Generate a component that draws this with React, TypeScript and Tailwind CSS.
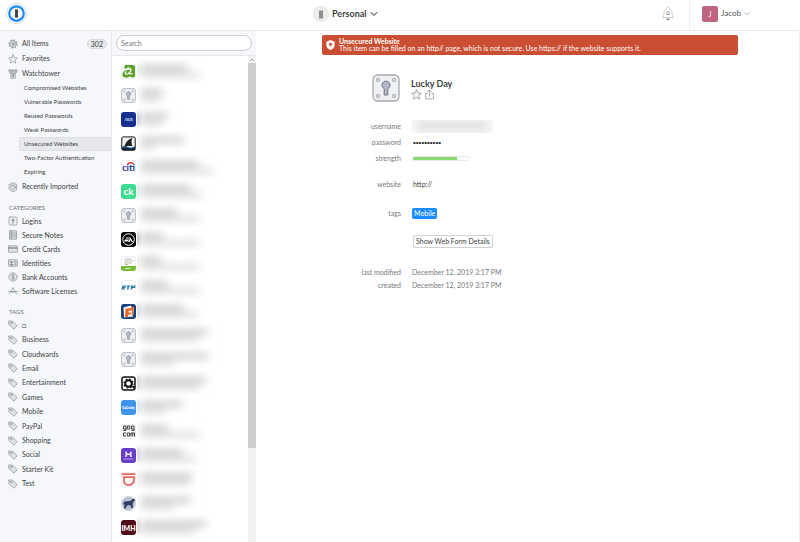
import type { ReactNode } from "react";

const stroke = { fill: "none", stroke: "currentColor", strokeWidth: 1.4, strokeLinecap: "round", strokeLinejoin: "round" } as const;

function Glyph({ children, size = "size-[10px]" }: { children: ReactNode; size?: string }) {
  return (
    <svg viewBox="0 0 20 20" className={`${size} shrink-0 text-[#8e9196]`} aria-hidden="true" {...stroke}>
      {children}
    </svg>
  );
}

const starPath = "M10 1.5l2.5 6 6.3.4-4.9 4.1 1.6 6.3L10 14.9l-5.5 3.4L6.1 12 1.2 7.9l6.3-.4z";

const icons: Record<string, ReactNode> = {
  gear: (
    <>
      <circle cx="10" cy="10" r="6.8" fill="#e3e5e9" />
      <circle cx="10" cy="10" r="8.3" strokeWidth="2" strokeDasharray="3.2 3.3" strokeLinecap="butt" />
      <circle cx="10" cy="10" r="2.6" />
      <path d="M10 3.5v4M10 12.5v4M3.5 10h4M12.5 10h4" strokeWidth="1" />
    </>
  ),
  star: <path d={starPath} />,
  tower: (
    <>
      <path d="M2.5 1.5h3v2h3v-2h3v2h3v-2h3v5l-2.5 2.5h-10L2.5 6.5z" fill="#b9bcc1" />
      <path d="M5.5 9.5v9h9v-9" fill="#e1e3e6" />
      <path d="M10 11v4" strokeWidth="3" />
    </>
  ),
  recent: (
    <>
      <path d="M3 4.500h3l1-2.500h6l1 2.500h3v11L14 18.500H6L3 15.500z" fill="#eceef1" />
      <circle cx="10" cy="10.500" r="5" />
      <path d="M10 7.500v3h2.500" />
    </>
  ),
  login: (
    <>
      <rect x="2" y="2" width="16" height="16" rx="2.5" fill="#eceef1" />
      <circle cx="10" cy="8" r="2" fill="currentColor" />
      <path d="M10 9v5" strokeWidth="2.4" />
    </>
  ),
  note: (
    <>
      <rect x="3" y="1.5" width="14" height="17" rx="1" fill="#dfe1e5" />
      <path d="M7 2v16M3.5 6h13M3.5 10h13M3.5 14h13" />
    </>
  ),
  card: (
    <>
      <rect x="1" y="3.5" width="18" height="13" rx="1.5" fill="#dfe1e5" />
      <path d="M1.5 8h17" strokeWidth="3" />
    </>
  ),
  identity: (
    <>
      <rect x="1" y="3.5" width="18" height="13" rx="1.5" fill="#dfe1e5" />
      <circle cx="7" cy="8.5" r="1.8" fill="currentColor" />
      <path d="M4 14c0-3 6-3 6 0zM13 7h3M13 10h3M13 13h3" fill="currentColor" />
    </>
  ),
  bank: (
    <>
      <circle cx="10" cy="10" r="8.3" fill="#e3e5e9" />
      <path d="M13 7c-.5-2-6-2-6 .5s6 2 6 4.8-5.500 2.500-6 .4M10 4v12" />
    </>
  ),
  software: <path d="M3 16L10 3l7 13M1 11h18M6.500 11l3.500 3 3.500-3" />,
  tag: (
    <>
      <path d="M2 2h7l9.500 9.500-7 7L2 9z" fill="#dfe1e5" />
      <circle cx="6" cy="6" r="1.6" fill="#f5f7fb" />
    </>
  ),
};

const mainItems = [
  { label: "All Items", icon: "gear", count: 302 },
  { label: "Favorites", icon: "star" },
  { label: "Watchtower", icon: "tower" },
];
const watchtower = [
  "Compromised Websites",
  "Vulnerable Passwords",
  "Reused Passwords",
  "Weak Passwords",
  "Unsecured Websites",
  "Two-Factor Authentication",
  "Expiring",
];
const categories = [
  { label: "Logins", icon: "login" },
  { label: "Secure Notes", icon: "note" },
  { label: "Credit Cards", icon: "card" },
  { label: "Identities", icon: "identity" },
  { label: "Bank Accounts", icon: "bank" },
  { label: "Software Licenses", icon: "software" },
];
const tags = ["□", "Business", "Cloudwards", "Email", "Entertainment", "Games", "Mobile", "PayPal", "Shopping", "Social", "Starter Kit", "Test"];

function NavLink({ label, icon, count }: { label: string; icon: string; count?: number }) {
  return (
    <a href="#" className="flex h-full items-center gap-[4px] pl-[8px] pr-[4px]">
      <Glyph>{icons[icon]}</Glyph>
      <span className="flex-1">{label}</span>
      {count && (
        <span className="rounded-full border border-[#d9dbdf] bg-[#e6e8eb] px-[3px] leading-[8px]">{count}</span>
      )}
    </a>
  );
}

function Sidebar() {
  return (
    <nav className="w-[112px] shrink-0 overflow-hidden border-r border-[#e6e8ec] bg-[#f5f7fb] pt-[5px] text-[#3d3f43]">
      <ul>
        {mainItems.map((item) => (
          <li key={item.label} className="h-[15px]">
            <NavLink {...item} />
          </li>
        ))}
      </ul>
      <ul className="pl-[19px] text-[6px]">
        {watchtower.map((label) => (
          <li key={label}>
            <a
              href="#"
              className={
                label === "Unsecured Websites"
                  ? "block rounded-l-[2px] border border-r-0 border-[#dddfe3] bg-[#e6e8ec] pl-[4px] leading-[12px]"
                  : "block pl-[5px] leading-[14px]"
              }
            >
              {label}
            </a>
          </li>
        ))}
      </ul>
      <div className="h-[15px]">
        <NavLink label="Recently Imported" icon="recent" />
      </div>
      <h2 className="mt-[8px] pl-[9px] text-[6px] leading-[12px] text-[#6c6f74]">CATEGORIES</h2>
      <ul>
        {categories.map((item) => (
          <li key={item.label} className="h-[14px]">
            <NavLink {...item} />
          </li>
        ))}
      </ul>
      <h2 className="mt-[8px] pl-[9px] text-[6px] leading-[12px] text-[#6c6f74]">TAGS</h2>
      <ul className="grid h-[173px] auto-rows-fr">
        {tags.map((label) => (
          <li key={label}>
            <NavLink label={label} icon="tag" />
          </li>
        ))}
      </ul>
    </nav>
  );
}

function Keyhole({ className }: { className: string }) {
  return (
    <svg viewBox="0 0 28 28" className={className} aria-hidden="true">
      <rect x="1" y="1" width="26" height="26" rx="4.5" fill="#eef0f4" stroke="#a5a8ad" strokeWidth="1.3" />
      <g fill="#e6e8ec" stroke="#8e9196" strokeWidth=".8">
        <circle cx="6" cy="6" r="1.6" />
        <circle cx="22" cy="6" r="1.6" />
        <circle cx="6" cy="22" r="1.6" />
        <circle cx="22" cy="22" r="1.6" />
      </g>
      <path d="M12.2 14.7a4 4 0 1 1 3.6 0V21h-3.6z" fill="#b4b9cc" stroke="#70747f" strokeWidth="1" />
    </svg>
  );
}

const word = { textAnchor: "middle", fontFamily: "Lato, sans-serif", fontWeight: 900 } as const;

const logos: Record<string, ReactNode> = {
  a2: (
    <>
      <path d="M8 2h15q5 0 5 5v16q0 4-3 4-5 0-7-2-5 3-10 2-6-1-5-7 1-7 9-8h6q-1-3-5-3H6z" fill="#5f9f2c" />
      <path d="M12 8q8-1 8 4-1 4-5 7h8M11 15q-4 2-2 5l4 1" fill="none" stroke="#fff" strokeWidth="2.5" />
    </>
  ),
  asus: <text x="15" y="17.5" fontSize="7" fill="#dfe5ff" {...word}>/SUS</text>,
  shark: (
    <>
      <rect x="1.5" y="1.5" width="27" height="27" rx="3" fill="#f2f3f4" stroke="#444" strokeWidth="2.5" />
      <path d="M7 20Q12 6 23 4q-4 8 0 16z" fill="#222" />
      <path d="M2 22q6-4 12 0t14-1v7H2z" fill="#111d30" />
      <path d="M3 23q6-3 11 0t13-1" fill="none" stroke="#3b82c4" strokeWidth="2" />
    </>
  ),
  citi: (
    <>
      <text x="15" y="22" fontSize="18" fill="#26408f" {...word}>citi</text>
      <path d="M13 8q6-5 12 0" fill="none" stroke="#e03a3a" strokeWidth="2.5" />
    </>
  ),
  ck: <text x="15" y="21" fontSize="20" fill="#fff" {...word} fontWeight={700}>ck</text>,
  ea: (
    <>
      <circle cx="15" cy="15" r="11.5" fill="none" stroke="#fff" strokeWidth="2" />
      <path d="M10 11h8l-1 2h-7zM8 15h8l-3 4H6zM14 20l5-9 5 9h-3l-2-4-2 4z" fill="#fff" />
    </>
  ),
  green: (
    <>
      <path d="M7 6h14M7 10h18" stroke="#aaa" strokeWidth="1.5" />
      <path d="M7 14h14M7 17h8" stroke="#8fb877" strokeWidth="1.5" />
      <path d="M0 20h30v10H0z" fill="#76be35" />
      <path d="M8 25h11" stroke="#d5f0bb" strokeWidth="2" />
    </>
  ),
  wave: (
    <path d="M3 11h7v2H6v1h3v2H5v1h4l-1 2H1zM11 11h8l-1 2h-2l-1 6h-3l1-6h-2zM20 11h9l-1 5h-5l-1 3h-3zM23 13v1h3v-1z" fill="#2879b0" />
  ),
  fandango: (
    <>
      <path d="M5 7l15-4 1 4 5 1-2 17-18 2z" fill="#fff" />
      <path d="M9 9l14-1-1 5-7 1v3h5l-1 4h-4l-1 5H8z" fill="#e96b28" />
      <path d="M21 4l5 3-3 18-2-4 1-8z" fill="#e96b28" />
    </>
  ),
  cog: (
    <>
      <rect x="2" y="2" width="26" height="26" rx="4" fill="#fff" stroke="#111" strokeWidth="3" />
      <circle cx="15" cy="15" r="6.5" fill="none" stroke="#111" strokeWidth="4" />
      <circle cx="15" cy="15" r="9" fill="none" stroke="#111" strokeWidth="2.5" strokeDasharray="3.5 3.57" />
      <path d="M20 20h7v7z" fill="#111" />
    </>
  ),
  go: <text x="15" y="17" fontSize="6" fill="#fff" {...word}>GoDaddy</text>,
  gog: (
    <g fill="none" stroke="#3a3a3a" strokeWidth="2">
      <path d="M10 10H5V4h5v9H5M12.500 4h5v6h-5zM26 10h-5V4h5v9h-5M10 18H5v6h5M12.500 18h5v6h-5zM20 25v-7h7v7M23.500 18v7" />
    </g>
  ),
  h: (
    <>
      <path d="M10 7v11M20 7v11M10 8q0 4.500 5 4.500t5 5M10 17q0-4.500 5-4.500t5-4.500" fill="none" stroke="#fff" strokeWidth="2" />
      <path d="M5 22h20" stroke="#cbb9f5" strokeWidth="1.5" />
    </>
  ),
  id: <path d="M1 4h28M4 10h22v4q0 12-11 12-9 0-9-9v-7" fill="none" stroke="#ea6558" strokeWidth="3.5" />,
  dog: (
    <>
      <circle cx="15" cy="15" r="14" fill="#b8bfce" />
      <path d="M4 16l3-5 12-1 5-5 5 3-4 3-2 5 1 8h-3l-3-6-6 1-3 6H6l1-8z" fill="#2c3c63" />
    </>
  ),
  imh: <text x="15" y="21" fontSize="14" fill="#fff" {...word}>IMH</text>,
};

type Entry = { logo: string; tile: string; title: number; sub: number; glow?: string };

const white = "bg-white ring-1 ring-inset ring-[#eceef0]";
const entries: Entry[] = [
  { logo: "a2", tile: white, title: 46, sub: 59, glow: "bg-[#cdeab9]" },
  { logo: "key", tile: "", title: 22, sub: 19 },
  { logo: "asus", tile: "bg-[#17308f]", title: 27, sub: 21, glow: "bg-[#6f81c9]" },
  { logo: "shark", tile: "", title: 43, sub: 14 },
  { logo: "citi", tile: white, title: 57, sub: 72 },
  { logo: "ck", tile: "bg-[#3ddc91]", title: 50, sub: 61, glow: "bg-[#8fecc0]" },
  { logo: "key", tile: "", title: 36, sub: 59 },
  { logo: "ea", tile: "bg-black", title: 22, sub: 59, glow: "bg-[#777777]" },
  { logo: "green", tile: white, title: 20, sub: 59, glow: "bg-[#d9f0c6]" },
  { logo: "wave", tile: white, title: 27, sub: 59 },
  { logo: "fandango", tile: "bg-[#173f7c]", title: 43, sub: 57, glow: "bg-[#9aaccc]" },
  { logo: "key", tile: "", title: 67, sub: 57 },
  { logo: "key", tile: "", title: 67, sub: 32 },
  { logo: "cog", tile: "", title: 65, sub: 59, glow: "bg-[#999999]" },
  { logo: "go", tile: "bg-[#3f94e9]", title: 42, sub: 24, glow: "bg-[#9accf8]" },
  { logo: "gog", tile: white, title: 27, sub: 59 },
  { logo: "h", tile: "bg-[#673ec6]", title: 42, sub: 54, glow: "bg-[#a98fe4]" },
  { logo: "id", tile: white, title: 51, sub: 49, glow: "bg-[#fbdcd8]" },
  { logo: "dog", tile: white, title: 50, sub: 32 },
  { logo: "imh", tile: "bg-[#4f0b17]", title: 65, sub: 54, glow: "bg-[#b08a90]" },
];

function ItemList() {
  return (
    <section className="flex w-[144px] shrink-0 flex-col">
      <div className="border-b border-[#e6e8ec] bg-[#f5f7fb] px-[4px] py-[4px]">
        <input
          type="search"
          aria-label="Search"
          placeholder="Search"
          className="block h-[16px] w-full rounded-full border border-[#c9ccd1] bg-white px-[4px] text-[7px] outline-none placeholder:text-[#77797d]"
        />
      </div>
      <div className="flex min-h-0 flex-1">
        <ul className="min-w-0 flex-1 overflow-hidden pt-[3px]">
          {entries.map((e, i) => (
            <li key={i}>
              <button type="button" aria-label={`Item ${i + 1}`} className="flex h-[24px] w-full items-center gap-px pl-[9px]">
                {e.logo === "key" ? (
                  <Keyhole className="size-[15px] shrink-0" />
                ) : (
                  <span className={`size-[15px] shrink-0 overflow-hidden rounded-[3px] ${e.tile}`}>
                    <svg viewBox="0 0 30 30" className="size-full" aria-hidden="true">
                      {logos[e.logo]}
                    </svg>
                  </span>
                )}
                <span className="flex h-full flex-1 items-center gap-[2px] overflow-hidden">
                  <span className={`h-[12px] w-[2px] blur-[2px] ${e.glow ?? "bg-white"}`} />
                  <span className="flex flex-col gap-px blur-[4px]">
                    <span className="h-[6px] bg-[#cacaca]" style={{ width: e.title }} />
                    <span className="h-[6px] bg-[#dfdfdf]" style={{ width: e.sub }} />
                  </span>
                </span>
              </button>
            </li>
          ))}
        </ul>
        <div className="flex w-[8px] shrink-0 flex-col bg-[#f1f1f1]">
          <svg viewBox="0 0 8 7" className="h-[7px]" aria-hidden="true">
            <path d="M2 5l2-2 2 2" fill="none" stroke="#a5a5a5" strokeWidth="1" />
          </svg>
          <div className="h-[385px] bg-[#cdcdcd]" />
        </div>
      </div>
    </section>
  );
}

function Row({ label, className, children }: { label: string; className: string; children: ReactNode }) {
  return (
    <div className={`flex items-center gap-[11px] ${className}`}>
      <dt className="w-[79px] text-right text-[#77797d]">{label}</dt>
      <dd>{children}</dd>
    </div>
  );
}

function Details() {
  return (
    <main className="flex-1 border-r border-[#eeeeee] pl-[66px] pr-[61px] pt-[4px]">
      <div role="alert" className="flex items-center gap-[4px] rounded-[2px] bg-[#ca4e31] py-[3px] pl-[4px] text-white">
        <svg viewBox="0 0 16 18" className="h-[10px] w-[9px]" aria-hidden="true">
          <path d="M8 0l7.500 3v6q0 6-7.500 9Q.5 15 .5 9V3z" fill="#fff" />
          <circle cx="8" cy="8" r="2.500" fill="#ca4e31" />
          <path d="M8 4v8M4.500 8h7" stroke="#ca4e31" />
        </svg>
        <div className="leading-[7px]">
          <strong className="block font-bold">Unsecured Website</strong>
          <p>This item can be filled on an http// page, which is not secure. Use https:// if the website supports it.</p>
        </div>
      </div>

      <div className="mt-[19px] flex gap-[11px] pl-[50px]">
        <Keyhole className="size-[28px]" />
        <div className="pt-[4px]">
          <h1 className="text-[9px] font-bold leading-[11px] text-[#3d3f43]">Lucky Day</h1>
          <div className="flex gap-[2px]">
            <button type="button" aria-label="Favorite">
              <Glyph size="size-[11px]">{icons.star}</Glyph>
            </button>
            <button type="button" aria-label="Share">
              <Glyph size="size-[11px]">
                <path d="M6 8H3v10h14V8h-3M10 13V2M6.500 5L10 1.500 13.500 5" />
              </Glyph>
            </button>
          </div>
        </div>
      </div>

      <dl className="mt-[16px]">
        <Row label="username" className="h-[16px]">
          <div className="flex h-[13px] w-[81px] items-center overflow-hidden bg-[#f8f8f8] px-[5px]">
            <div className="h-[6px] w-full bg-[#d4d4d4] blur-[4px]" />
          </div>
        </Row>
        <Row label="password" className="h-[16px]">
          <span className="pl-px font-['Liberation_Sans',sans-serif] text-[8px] text-[#222]">••••••••••</span>
        </Row>
        <Row label="strength" className="h-[16px]">
          <div className="h-[5px] w-[57px] overflow-hidden rounded-full border border-[#e6e6e6]">
            <div className="h-full w-4/5 bg-[#8bd973]" />
          </div>
        </Row>
        <Row label="website" className="mt-[10px] h-[16px]">
          <a href="#" className="pl-px text-[#3d3f43]">http://</a>
        </Row>
        <Row label="tags" className="mt-[13px] h-[16px]">
          <a href="#" className="block rounded-[2px] bg-[#1a8cff] px-[2px] leading-[11px] text-white">Mobile</a>
        </Row>
      </dl>
      <button
        type="button"
        className="ml-[91px] mt-[14px] block rounded-[2px] border border-[#cfd1d4] px-[2px] leading-[11px] text-[#3d3f43]"
      >
        Show Web Form Details
      </button>
      <dl className="mt-[18px] text-[#77797d]">
        <Row label="last modified" className="h-[13px]">December 12, 2019 3:17 PM</Row>
        <Row label="created" className="h-[13px]">December 12, 2019 3:17 PM</Row>
      </dl>
    </main>
  );
}

function Chevron({ className, weight }: { className: string; weight: number }) {
  return (
    <svg viewBox="0 0 12 8" className={className} aria-hidden="true" {...stroke} strokeWidth={weight}>
      <path d="M1.5 1.5L6 6l4.5-4.5" />
    </svg>
  );
}

function Header() {
  return (
    <header className="flex h-[31px] shrink-0 border-b border-[#e8e8e8] pb-[3px]">
      <a href="#" aria-label="1Password" className="flex w-[256px] items-center pl-[6px]">
        <svg viewBox="0 0 42 42" className="size-[21px]" aria-hidden="true">
          <circle cx="21" cy="21" r="20" fill="#fff" stroke="#c9c9c9" strokeWidth="1.500" />
          <circle cx="21" cy="21" r="14.500" fill="#f7f7f7" stroke="#1a8cff" strokeWidth="4.500" />
          <path d="M18 13h6v7l-1 2 1 1v6h-6v-7l1-2-1-1z" fill="#3c4042" />
        </svg>
      </a>
      <button type="button" className="ml-[57px] flex items-center gap-[3px] text-[9px] font-bold text-[#3d3f43]">
        <svg viewBox="0 0 32 32" className="size-[16px]" aria-hidden="true">
          <circle cx="16" cy="16" r="15.500" fill="#ececec" stroke="#e0e0e0" />
          <path d="M12 9h8v16h-8z" fill="#8d8d8d" />
        </svg>
        Personal
        <Chevron weight={1.8} className="h-[6px] w-[8px] text-[#77797d]" />
      </button>
      <button type="button" aria-label="Notifications" className="ml-auto mr-[15px] flex items-center">
        <svg viewBox="0 0 24 30" className="h-[15px] w-[12px]" aria-hidden="true">
          <path d="M1 23q3-3 3-10 1-7 6-9l2-3 2 3q5 2 6 9 0 7 3 10z" fill="#fff" stroke="#bfc1c5" strokeWidth="1.500" />
          <path d="M8 25h8q-1 4-4 4t-4-4z" fill="#8e9196" />
          <text x="12" y="18" textAnchor="middle" fontSize="11" fontFamily="Lato, sans-serif" fill="#55575b">0</text>
        </svg>
      </button>
      <div className="-mb-[3px] flex w-[111px] border-l border-[#eeeeee] pb-[3px] pl-[12px]">
        <button type="button" className="flex items-center gap-[3px] text-[7px] text-[#55575b]">
          <span className="size-[16px] rounded-[2px] bg-[#c0657f] text-center leading-[16px] text-white">J</span>
          <span className="text-[8px]">Jacob</span>
          <Chevron weight={1.6} className="h-[4px] w-[6px] text-[#a5a8b4]" />
        </button>
      </div>
    </header>
  );
}

export default function App() {
  return (
    <div className="flex h-screen flex-col overflow-hidden bg-white font-['Lato','DejaVu_Sans',sans-serif] text-[7px] leading-[9px]">
      <Header />
      <div className="flex min-h-0 flex-1">
        <Sidebar />
        <ItemList />
        <Details />
      </div>
    </div>
  );
}
